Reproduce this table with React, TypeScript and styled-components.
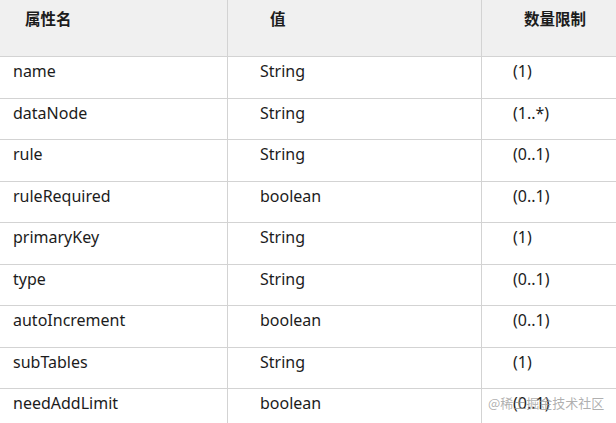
import React from "react";
import styled, { createGlobalStyle } from "styled-components";

const GlobalStyle = createGlobalStyle`
  html, body {
    margin: 0;
    padding: 0;
    background: #ffffff;
  }
  body {
    font-family: "Noto Sans", "Noto Sans CJK SC", sans-serif;
    color: #1f1f1f;
  }
`;

const Page = styled.div`
  position: relative;
  width: 616px;
  height: 423px;
  overflow: hidden;
  background: #ffffff;
`;

const Table = styled.div`
  display: flex;
  flex-direction: column;
  width: 640px;
`;

const Row = styled.div<{ $header?: boolean }>`
  display: grid;
  grid-template-columns: 227px 254px 1fr;
  height: ${(p) => (p.$header ? "56px" : "40.5px")};
  border-bottom: 1px solid #d3d3d3;
  background: ${(p) => (p.$header ? "#f0f0f0" : "#ffffff")};
`;

const Cell = styled.div<{ $header?: boolean; $pad: number; $divider?: boolean }>`
  box-sizing: border-box;
  border-left: ${(p) => (p.$divider ? "1px solid #d3d3d3" : "none")};
  padding-left: ${(p) => p.$pad}px;
  padding-top: ${(p) => (p.$header ? "7px" : "3px")};
  font-family: ${(p) =>
    p.$header
      ? '"Noto Sans CJK SC", "Noto Sans", sans-serif'
      : '"Noto Sans", "Noto Sans CJK SC", sans-serif'};
  font-size: ${(p) => (p.$header ? "15.5px" : "16px")};
  font-weight: ${(p) => (p.$header ? 700 : 400)};
  line-height: 22px;
  color: #1c1c1c;
  white-space: nowrap;
`;

const Watermark = styled.div`
  position: absolute;
  left: 488px;
  top: 394px;
  font-family: "Noto Sans CJK SC", "Noto Sans", sans-serif;
  font-size: 13px;
  line-height: 18px;
  color: rgba(150, 150, 150, 0.75);
  white-space: nowrap;
  pointer-events: none;
`;

const rows: [string, string, string][] = [
  ["name", "String", "(1)"],
  ["dataNode", "String", "(1..*)"],
  ["rule", "String", "(0..1)"],
  ["ruleRequired", "boolean", "(0..1)"],
  ["primaryKey", "String", "(1)"],
  ["type", "String", "(0..1)"],
  ["autoIncrement", "boolean", "(0..1)"],
  ["subTables", "String", "(1)"],
  ["needAddLimit", "boolean", "(0..1)"],
];

export default function App() {
  return (
    <Page>
      <GlobalStyle />
      <Table>
        <Row $header>
          <Cell $header $pad={25}>属性名</Cell>
          <Cell $header $pad={42} $divider>值</Cell>
          <Cell $header $pad={42} $divider>数量限制</Cell>
        </Row>
        {rows.map(([name, type, count]) => (
          <Row key={name}>
            <Cell $pad={13}>{name}</Cell>
            <Cell $pad={32} $divider>{type}</Cell>
            <Cell $pad={31} $divider>{count}</Cell>
          </Row>
        ))}
      </Table>
      <Watermark>@稀土掘金技术社区</Watermark>
    </Page>
  );
}
